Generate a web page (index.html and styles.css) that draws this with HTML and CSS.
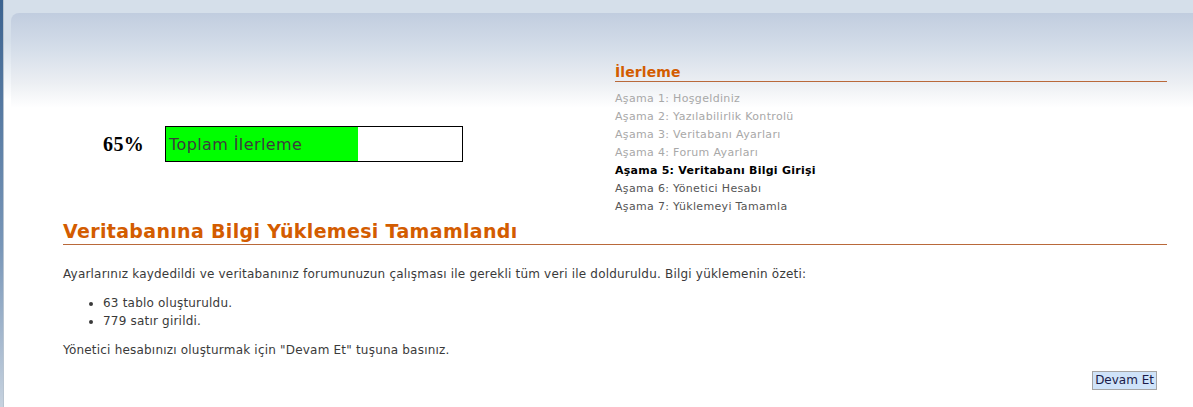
FILE: index.html
```html
<!DOCTYPE html>
<html lang="tr">
<head>
    <meta charset="UTF-8">
    <title>Kurulum - Aşama 5</title>
    <link rel="stylesheet" href="styles.css">
</head>
<body>
    <div class="page">
        <div class="panel">
            <div class="top">
                <div class="progress-area">
                    <div class="percent">65%</div>
                    <div class="bar">
                        <div class="bar-fill" style="width: 65%"></div>
                        <span class="bar-label">Toplam İlerleme</span>
                    </div>
                </div>
                <div class="steps">
                    <h3>İlerleme</h3>
                    <ul class="step-list">
                        <li class="done">Aşama 1: Hoşgeldiniz</li>
                        <li class="done">Aşama 2: Yazılabilirlik Kontrolü</li>
                        <li class="done">Aşama 3: Veritabanı Ayarları</li>
                        <li class="done">Aşama 4: Forum Ayarları</li>
                        <li class="current">Aşama 5: Veritabanı Bilgi Girişi</li>
                        <li>Aşama 6: Yönetici Hesabı</li>
                        <li>Aşama 7: Yüklemeyi Tamamla</li>
                    </ul>
                </div>
            </div>

            <h2>Veritabanına Bilgi Yüklemesi Tamamlandı</h2>
            <p>Ayarlarınız kaydedildi ve veritabanınız forumunuzun çalışması ile gerekli tüm veri ile dolduruldu. Bilgi yüklemenin özeti:</p>
            <ul class="summary">
                <li>63 tablo oluşturuldu.</li>
                <li>779 satır girildi.</li>
            </ul>
            <p>Yönetici hesabınızı oluşturmak için "Devam Et" tuşuna basınız.</p>

            <div class="actions">
                <button type="button">Devam Et</button>
            </div>
        </div>
    </div>
</body>
</html>
```

FILE: styles.css
```css
html, body {
    height: 100%;
}
body {
    margin: 0;
    font-family: "DejaVu Sans", Verdana, sans-serif;
    font-size: 12px;
    letter-spacing: 0.2px;
    color: #3a3a3a;
    background: #fff;
}
.page {
    min-height: 100%;
    box-sizing: border-box;
    border-left: 3px solid #4a6f99;
    border-image: linear-gradient(to bottom, #3b6390, #7896b8 60%, #c9d4e0) 1;
    padding: 13px 0 0 8px;
    background: linear-gradient(to bottom, #d5dfea 0, #d5dfea 40px, #fff 100px);
    box-shadow: inset 1px 0 0 #b8c4d0;
}
.panel {
    border-radius: 8px 0 0 0;
    padding: 50px 26px 20px 52px;
    background: linear-gradient(to bottom, #c1cddf 0, #d4dde9 35px, #eceff3 70px, #fff 95px);
}

/* top row: progress bar + step list */
.top {
    display: flex;
}
.progress-area {
    width: 552px;
    display: flex;
    align-items: center;
    padding-top: 63px;
    align-self: flex-start;
}
.percent {
    width: 81px;
    padding-right: 21px;
    text-align: right;
    font-family: "Liberation Serif", "Times New Roman", serif;
    font-weight: bold;
    font-size: 20px;
    letter-spacing: 0.3px;
    color: #000;
}
.bar {
    position: relative;
    width: 296px;
    height: 34px;
    border: 1px solid #000;
    background: #fff;
}
.bar-fill {
    height: 100%;
    background: #00ff00;
}
.bar-label {
    position: absolute;
    left: 3px;
    top: 1px;
    line-height: 34px;
    font-size: 16px;
    letter-spacing: 0.4px;
    color: #3c3c3c;
}
.steps {
    flex: 1;
}
.steps h3 {
    margin: 0;
    font-size: 14px;
    line-height: 18px;
    letter-spacing: 0.1px;
    color: #d35c00;
    border-bottom: 1px solid #b9693a;
}
.step-list {
    list-style: none;
    margin: 8px 0 0;
    padding: 0;
    font-size: 11px;
    line-height: 18px;
    letter-spacing: 0.33px;
    color: #555;
}
.step-list .done {
    color: #a8a8a8;
}
.step-list .current {
    color: #000;
    font-weight: bold;
    letter-spacing: 0.25px;
}

/* main content */
h2 {
    margin: 4px 0 0;
    font-size: 19px;
    line-height: 22px;
    letter-spacing: 0.33px;
    padding-bottom: 2px;
    color: #d35c00;
    border-bottom: 1px solid #b9693a;
}
p {
    margin: 20px 0 0;
    line-height: 18px;
}
.summary {
    margin: 11px 0 0;
    padding-left: 40px;
    line-height: 18px;
}
.summary + p {
    margin-top: 11px;
}
.actions {
    margin-top: 12px;
    padding-right: 10px;
    text-align: right;
}
button {
    font-family: "DejaVu Sans", Verdana, sans-serif;
    font-size: 12px;
    line-height: 15px;
    padding: 1px 2px;
    color: #1a1a48;
    background: #cfe3f9;
    border: 1px solid #a4a4a4;
    border-radius: 0;
}
```
